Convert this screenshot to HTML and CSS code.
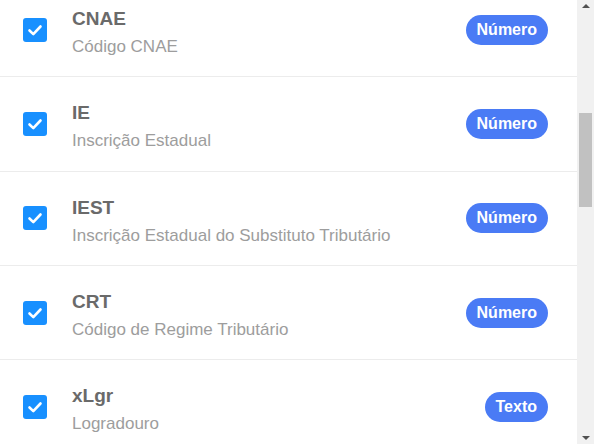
FILE: index.html
```html
<!DOCTYPE html>
<html lang="pt-BR">
<head>
    <meta charset="UTF-8">
    <meta name="viewport" content="width=device-width, initial-scale=1.0">
    <title>Campos</title>
    <link rel="stylesheet" href="styles.css">
</head>
<body>
    <div class="panel">
        <div class="list-view">
            <div class="field-list">
                <div class="field">
                    <span class="check"><svg viewBox="0 0 24 24"><path d="M6.5 12.5l3.8 3.6 7.2-7.6"/></svg></span>
                    <div class="field-text">
                        <h3>CNAE</h3>
                        <p>Código CNAE</p>
                    </div>
                    <span class="tag">Número</span>
                </div>
                <div class="field">
                    <span class="check"><svg viewBox="0 0 24 24"><path d="M6.5 12.5l3.8 3.6 7.2-7.6"/></svg></span>
                    <div class="field-text">
                        <h3>IE</h3>
                        <p>Inscrição Estadual</p>
                    </div>
                    <span class="tag">Número</span>
                </div>
                <div class="field">
                    <span class="check"><svg viewBox="0 0 24 24"><path d="M6.5 12.5l3.8 3.6 7.2-7.6"/></svg></span>
                    <div class="field-text">
                        <h3>IEST</h3>
                        <p>Inscrição Estadual do Substituto Tributário</p>
                    </div>
                    <span class="tag">Número</span>
                </div>
                <div class="field">
                    <span class="check"><svg viewBox="0 0 24 24"><path d="M6.5 12.5l3.8 3.6 7.2-7.6"/></svg></span>
                    <div class="field-text">
                        <h3>CRT</h3>
                        <p>Código de Regime Tributário</p>
                    </div>
                    <span class="tag">Número</span>
                </div>
                <div class="field">
                    <span class="check"><svg viewBox="0 0 24 24"><path d="M6.5 12.5l3.8 3.6 7.2-7.6"/></svg></span>
                    <div class="field-text">
                        <h3>xLgr</h3>
                        <p>Logradouro</p>
                    </div>
                    <span class="tag">Texto</span>
                </div>
            </div>
        </div>

        <div class="scrollbar">
            <span class="arrow up"></span>
            <div class="track">
                <div class="thumb"></div>
            </div>
            <span class="arrow down"></span>
        </div>
    </div>
</body>
</html>
```

FILE: styles.css
```css
body {
    margin: 0;
    font-family: "Liberation Sans", Arial, sans-serif;
    background-color: #fff;
    color: #6a6a6a;
}

.panel {
    display: flex;
    height: 444px;
    overflow: hidden;
}

.list-view {
    flex: 1;
    overflow: hidden;
}

/* list is scrolled a bit past the top of the first row */
.field-list {
    margin-top: -17px;
}

.field {
    display: flex;
    align-items: center;
    height: 94.33px;
    box-sizing: border-box;
    padding: 0 29px 0 23px;
    border-bottom: 1px solid #ececec;
}

.check {
    width: 24px;
    height: 24px;
    border-radius: 3px;
    background-color: #1890ff;
    flex-shrink: 0;
}

.check svg {
    display: block;
    width: 24px;
    height: 24px;
    fill: none;
    stroke: #fff;
    stroke-width: 2.6;
    stroke-linecap: round;
    stroke-linejoin: round;
}

.field-text {
    flex: 1;
    margin-left: 25px;
    padding-top: 6px;
}

.field-text h3 {
    margin: 0;
    font-size: 19px;
    line-height: 24px;
    font-weight: bold;
    color: #6a6a6a;
}

.field-text p {
    margin: 5px 0 0;
    font-size: 17px;
    line-height: 22px;
    color: #9d9d9d;
}

.tag {
    height: 30px;
    line-height: 30px;
    padding: 0 11px;
    border-radius: 15px;
    background-color: #4a7bf5;
    color: #fff;
    font-size: 16px;
    font-weight: bold;
}

.scrollbar {
    width: 17px;
    display: flex;
    flex-direction: column;
    background-color: #f1f1f1;
}

.arrow {
    height: 17px;
    display: flex;
    justify-content: center;
    align-items: center;
}

.arrow::before {
    content: "";
    border-left: 4px solid transparent;
    border-right: 4px solid transparent;
}

.arrow.up::before {
    border-bottom: 4px solid #505050;
    margin-bottom: 5px;
}

.arrow.down::before {
    border-top: 4px solid #505050;
    margin-top: 5px;
}

.track {
    flex: 1;
}

.thumb {
    margin: 96px 2px 0;
    height: 94px;
    background-color: #c1c1c1;
}
```
